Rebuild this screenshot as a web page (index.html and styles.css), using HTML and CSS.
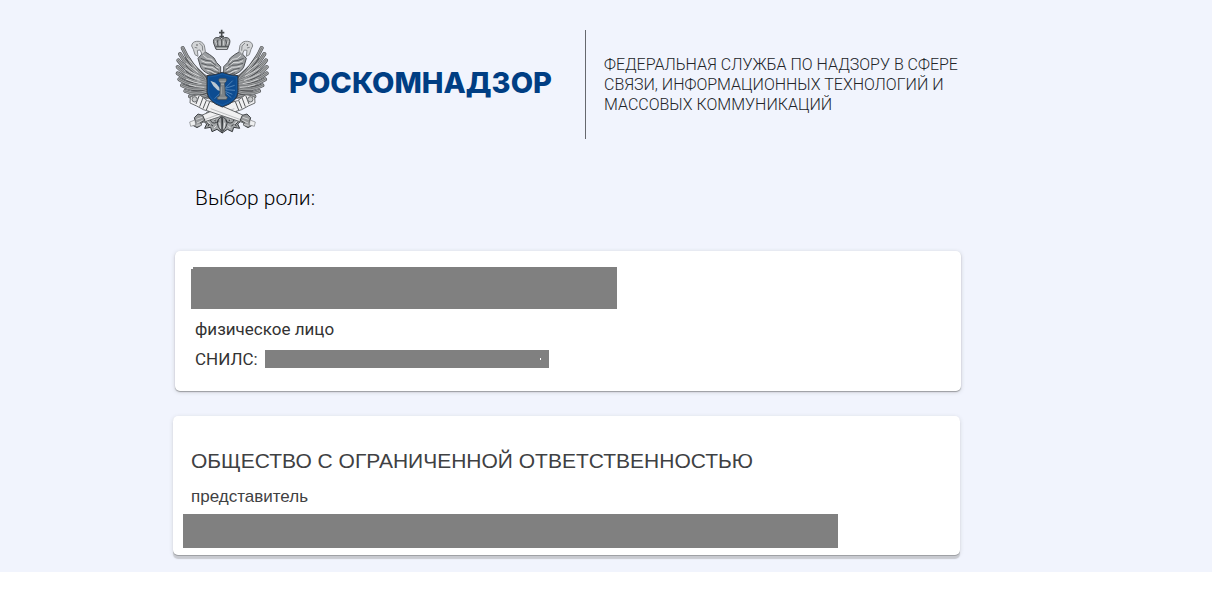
FILE: index.html
```html
<!DOCTYPE html>
<html lang="ru">
<head>
<meta charset="utf-8">
<meta name="viewport" content="width=device-width, initial-scale=1">
<title>Роскомнадзор — выбор роли</title>
<link rel="stylesheet" href="styles.css">
</head>
<body>
<div class="page">
  <header class="header">
    <svg class="emblem" viewBox="0 0 315 345" role="img" aria-label="Герб Роскомнадзора">
      <defs>
        <g id="feathers" fill="none" stroke-linecap="round">
          <path d="M100 158Q60 122 38 72"/>
          <path d="M104 163Q54 134 30 90"/>
          <path d="M106 167Q52 148 25 109"/>
          <path d="M108 172Q52 162 23 129"/>
          <path d="M108 178Q55 175 23 148"/>
          <path d="M110 184Q62 188 28 166"/>
          <path d="M112 192Q69 201 36 184"/>
          <path d="M114 201Q78 214 46 201"/>
          <path d="M116 211Q86 226 60 217"/>
        </g>
        <g id="half">
          <path d="M44 84Q62 100 74 122L104 150 128 164 116 226 86 220 52 190Z" fill="#77797b"/>
          <use href="#feathers" stroke="#4c4e51" stroke-width="12"/>
          <use href="#feathers" stroke="#a6a8aa" stroke-width="8"/>
          <use href="#feathers" stroke="#606365" stroke-width="2"/>
          <path d="M52 102Q68 118 80 134M48 118Q70 134 84 146M44 133Q68 149 88 157M44 149Q67 162 91 169M48 165Q72 176 95 179M57 182Q80 190 103 190" fill="none" stroke="#d2d3d4" stroke-width="3"/>
          <path d="M143 184Q139 160 118 151Q92 140 89 120L84 103 94 92 98 76 106 84Q118 90 132 102L140 116 152 128V184Z" fill="#9a9da0" stroke="#505356" stroke-width="3"/>
          <path d="M100 94L112 104 126 106 134 116M94 110L108 116 124 116 134 128 146 132M98 125L112 129 126 130 143 140M110 138L124 142 134 149 146 150M128 152L136 158 148 158" fill="none" stroke="#dcddde" stroke-width="3"/>
          <path d="M92 103L108 109 121 111 138 124M94 118L112 123 129 124 146 138M104 133L120 136 134 143 148 146M118 146L130 150 146 155" fill="none" stroke="#5a5d60" stroke-width="3"/>
          <path d="M65 66Q66 53 80 52Q96 50 103 64L106 82 97 92 90 78 82 79 84 97 75 92 70 76Z" fill="#d3d5d7" stroke="#84878a" stroke-width="3"/>
          <path d="M88 57L97 66 98 80M74 70L82 72" fill="none" stroke="#84878a" stroke-width="3"/>
          <circle cx="81" cy="63" r="2" fill="#333"/>
          <path d="M154 258Q126 250 108 268L96 287 110 300 104 313 122 310 126 323 141 316 157 327Z" fill="#a2a5a7" stroke="#35383b" stroke-width="3"/>
          <path d="M147 270Q116 270 122 291Q131 304 147 290M112 280Q101 289 117 302M153 280Q136 289 145 308L154 321M129 306Q117 296 114 307M136 273Q128 281 136 292" fill="none" stroke="#3a3d40" stroke-width="3"/>
          <path d="M146 276Q130 278 133 288M110 291L122 302M149 296L151 314M132 312L139 305" fill="none" stroke="#e2e3e4" stroke-width="3"/>
        </g>
        <g id="scepter">
          <path d="M71 215L88 212 112 230 130 235 241 283 234 301 117 262 100 257 80 246 60 237 61 220Z" fill="#f0f0f1" stroke="#6b6e70" stroke-width="3"/>
          <path d="M88 214L78 240M99 221L89 248M109 229L99 254M119 233L109 258" stroke="#55585a" stroke-width="3"/>
          <path d="M122 254L228 293" stroke="#bcbec0" stroke-width="3"/>
          <circle cx="74" cy="226" r="8" fill="#c6c8c9" stroke="#66696b" stroke-width="3"/>
          <path d="M217 274L231 270 242 281 238 295 248 303 234 311 220 303 223 294 210 290Z" fill="#96989a" stroke="#45484b" stroke-width="3"/>
          <path d="M218 280L236 286M217 289L234 297M221 302L236 304" stroke="#d3d4d5" stroke-width="3"/>
          <path d="M240 288L256 294 253 307 238 303Z" fill="#eeeff0" stroke="#7b7d80" stroke-width="2"/>
        </g>
      </defs>
      <use href="#half"/>
      <use href="#half" transform="matrix(-1 0 0 1 313 0)"/>
      <use href="#scepter" transform="matrix(-1 0 0 1 315 0)"/>
      <use href="#scepter"/>
      <path d="M138 76L131 58Q128 44 138 41Q148 38 155 46Q163 38 172 41Q182 44 179 58L172 76Z" fill="#96999b" stroke="#4a4d50" stroke-width="3"/>
      <path d="M155 17V42M147 26H163M148 38H162" stroke="#45484b" stroke-width="5" fill="none"/>
      <path d="M155 47V68M144 47Q138 57 145 68M167 47Q173 57 166 68M137 68H174" stroke="#505356" stroke-width="3" fill="none"/>
      <path d="M136 50L140 62M175 50L171 62M150 50V64M161 50V64M140 73H171" stroke="#d0d2d3" stroke-width="3"/>
      <path d="M111 155Q137 153 157 145Q179 154 204 155V205Q202 234 157 249Q114 234 111 205Z" fill="#0d4c91" stroke="#30363e" stroke-width="3"/>
      <path d="M116 159Q139 157 157 150Q178 158 199 159V205Q197 229 157 243Q118 229 116 205Z" fill="none" stroke="#1f62a6" stroke-width="2"/>
      <path d="M128 175L184 221M188 170L134 224M166 193L194 184M166 197L195 199M165 202L187 211" stroke="#6fa0cd" stroke-width="2"/>
      <path d="M121 170Q146 176 151 201L143 199Q127 185 121 170Z" fill="#bdc9d2"/>
      <path d="M145 168L149 163H167L171 168 164 178 166 214 173 220 169 227H144L140 221 149 215 151 178Z" fill="#7d8386" stroke="#3d4851" stroke-width="2"/>
      <path d="M148 172H168M153 181H162M154 188V211M146 222H169" stroke="#b5b9ba" stroke-width="2"/>
    </svg>
    <div class="wordmark">РОСКОМНАДЗОР</div>
    <p class="agency">ФЕДЕРАЛЬНАЯ СЛУЖБА ПО НАДЗОРУ В СФЕРЕ<br>СВЯЗИ, ИНФОРМАЦИОННЫХ ТЕХНОЛОГИЙ И<br>МАССОВЫХ КОММУНИКАЦИЙ</p>
  </header>
  <main class="content">
    <h1 class="title">Выбор роли:</h1>
    <section class="card">
      <div class="mask mask-name"></div>
      <p class="role">физическое лицо</p>
      <p class="snils">СНИЛС: <span class="mask mask-number"></span></p>
    </section>
    <section class="card card-company">
      <h2 class="company">ОБЩЕСТВО С ОГРАНИЧЕННОЙ ОТВЕТСТВЕННОСТЬЮ</h2>
      <p class="representative">представитель</p>
      <div class="mask mask-company"></div>
    </section>
  </main>
</div>
</body>
</html>
```
FILE: styles.css
```css
* { box-sizing: border-box; }
body {
  margin: 0;
  background: #fff;
  color: #333;
  font-family: Roboto, "Noto Sans", sans-serif;
}
h1, h2, p { margin: 0; font-weight: 400; }
.page {
  min-height: calc(100vh - 20px);
  margin: 0 12px 20px 0;
  padding: 24px 252px 16px 173px;
  background: #f1f4fd;
}
.header {
  display: flex;
  align-items: flex-start;
  margin-left: -3px;
}
.emblem { flex: none; width: 105px; height: 115px; }
.wordmark {
  margin: 43px 33px 0 14px;
  color: #003e83;
  font-family: Inter, Roboto, sans-serif;
  font-size: 29px;
  line-height: 32px;
  font-weight: 800;
}
.agency {
  flex: none;
  margin-top: 6px;
  padding: 25px 0 24px 18px;
  border-left: 1px solid #66686e;
  color: #222529;
  font-size: 16px;
  line-height: 20px;
  font-weight: 300;
}
.title {
  margin: 46px 0 40px 22px;
  color: #000;
  font-size: 21px;
  line-height: 26px;
  font-weight: 300;
}
.card {
  margin: 0 -1px 0 2px;
  padding: 16px 16px 22px;
  border-radius: 5px;
  background: #fff;
  box-shadow: 0 1px 1px #9b9da1, 0 1px 4px #c9cbd1;
}
.mask { background: #808080; }
.mask-name {
  width: 57%;
  max-width: 426px;
  height: 42px;
  clip-path: polygon(2px 0, 100% 0, 100% 100%, 0 100%, 0 2px, 2px 2px);
}
.role, .snils {
  margin-left: 4px;
  font-size: 17px;
  line-height: 20px;
}
.role { margin-top: 10px; }
.snils { display: flex; align-items: center; gap: 7px; margin-top: 10px; }
.mask-number {
  width: 284px;
  height: 18px;
  background: linear-gradient(#fff, #fff) right 8px center / 1px 2px no-repeat #808080;
}
.card-company {
  margin: 25px 0 0;
  padding: 31px 10px 7px;
  box-shadow: 0 1px 0 #9fa1a5, 0 4px 1px #c8cad0, 0 1px 4px #d3d5db;
}
.company, .representative { margin-left: 8px; color: #3f4143; font-family: "Liberation Sans", Arial, sans-serif; }
.company { font-size: 21px; line-height: 28px; }
.representative { margin-top: 12px; font-size: 17px; line-height: 20px; }
.mask-company { width: 86%; max-width: 655px; height: 34px; margin-top: 7px; }
```
